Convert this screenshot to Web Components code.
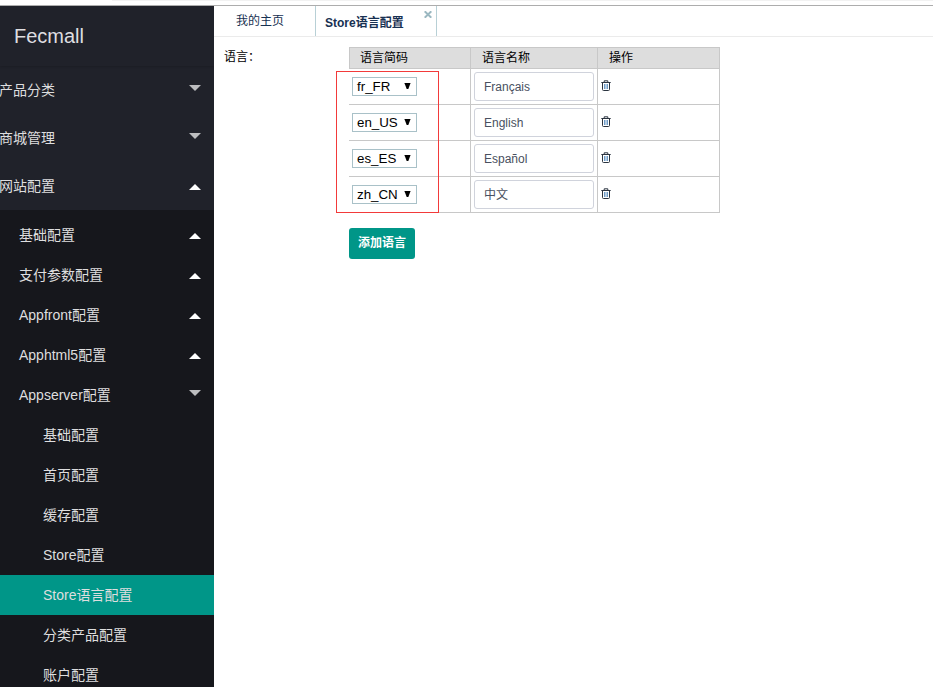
<!DOCTYPE html>
<html lang="zh-CN"><head><meta charset="utf-8"><title>Fecmall</title>
<style>
html,body{margin:0;height:100%;overflow:hidden}
body{font-family:"Liberation Sans","Noto Sans CJK SC",sans-serif;font-size:12px;color:#000;background:#fff}
</style></head><body>
<admin-shell>
 <side-bar slot="side" brand="Fecmall">
  <nav-item arrow="down">产品分类</nav-item>
  <nav-item arrow="down">商城管理</nav-item>
  <nav-item arrow="up">网站配置</nav-item>
  <nav-group slot="group">
   <nav-item level="2" arrow="up">基础配置</nav-item>
   <nav-item level="2" arrow="up">支付参数配置</nav-item>
   <nav-item level="2" arrow="up">Appfront配置</nav-item>
   <nav-item level="2" arrow="up">Apphtml5配置</nav-item>
   <nav-item level="2" arrow="down">Appserver配置</nav-item>
   <nav-item level="3">基础配置</nav-item>
   <nav-item level="3">首页配置</nav-item>
   <nav-item level="3">缓存配置</nav-item>
   <nav-item level="3">Store配置</nav-item>
   <nav-item level="3" active>Store语言配置</nav-item>
   <nav-item level="3">分类产品配置</nav-item>
   <nav-item level="3">账户配置</nav-item>
  </nav-group>
 </side-bar>
 <page-tab slot="tabs">我的主页</page-tab>
 <page-tab slot="tabs" active>Store语言配置</page-tab>
 <form-field label="语言：">
  <lang-table>
   <lang-row code="fr_FR" name="Français"></lang-row>
   <lang-row code="en_US" name="English"></lang-row>
   <lang-row code="es_ES" name="Español"></lang-row>
   <lang-row code="zh_CN" name="中文"></lang-row>
  </lang-table>
  <solid-button>添加语言</solid-button>
 </form-field>
</admin-shell>
<script>
function define(name, render){
  customElements.define(name, class extends HTMLElement{
    constructor(){super();this.attachShadow({mode:'open'});}
    connectedCallback(){this.shadowRoot.innerHTML='<style>*{box-sizing:border-box}:host{box-sizing:border-box}</style>'+render(this);}
  });
}
define('admin-shell',()=>`<style>
:host{display:flex;flex-direction:column;height:687px}
.top{height:6px;flex:none;border-bottom:1px solid #adadad;background:linear-gradient(#f2f2f2,#f2f2f2) 112px 0/100% 1px no-repeat}
.body{display:flex;flex:1;min-height:0}
main{flex:1;min-width:0}
.tabs{display:flex;height:31px;border-bottom:1px solid #ebebeb}
</style><div class="top"></div><div class="body"><slot name="side"></slot><main><div class="tabs"><slot name="tabs"></slot></div><slot></slot></main></div>`);
define('side-bar',el=>`<style>
:host{display:flex;flex-direction:column;flex:none;width:214px;background:#20222a;overflow:hidden}
.brand{height:60px;flex:none;padding-left:14px;font-size:20px;line-height:60px;color:#dedee0;box-shadow:0 1px 2px rgba(0,0,0,.15)}
</style><div class="brand">${el.getAttribute('brand')}</div><slot></slot><slot name="group"></slot>`);
define('nav-group',()=>`<style>:host{display:block;flex:1;padding-top:5px;background:#16171c}</style><slot></slot>`);
define('nav-item',el=>`<style>
:host{display:flex;flex:none;align-items:center;justify-content:space-between;height:48px;padding-right:13px;font-size:14px;color:#dededf;white-space:nowrap}
span{display:block;line-height:20px;margin-left:-1px}
:host([level="2"]){height:40px;padding-left:20px}
:host([level="3"]){height:40px;padding-left:44px}
:host([active]){background:#009688}
svg{display:block;width:12px;height:6px;fill:#fff;margin-top:2px}
:host([arrow=down]) svg{fill:#bcbdbf;margin-top:-4px}
</style><span><slot></slot></span>${el.hasAttribute('arrow')?`<svg viewBox="0 0 12 6"><path d="${el.getAttribute('arrow')==='up'?'M0 6 6 0l6 6z':'M0 0h12L6 6z'}"/></svg>`:''}`);
define('page-tab',el=>`<style>
:host{display:block;position:relative;height:30px;width:102px;padding-left:22px;border-right:1px solid #b8d0d6;line-height:31px;color:#183152}
:host([active]){width:121px;padding-left:9px;line-height:35px;font-weight:bold}
svg{position:absolute;right:4px;top:5px;width:8px;height:7px;stroke:#9bb8c1;stroke-width:2;fill:none}
</style><slot></slot>${el.hasAttribute('active')?'<svg viewBox="0 0 8 7"><path d="M.7.3 7.3 6.7M7.3.3.7 6.7"/></svg>':''}`);
define('form-field',el=>`<style>
:host{display:grid;grid-template-columns:125px 371px;padding:10px 0 0 10px}
label{line-height:20px}
</style><label>${el.getAttribute('label')}</label><div><slot></slot></div>`);
define('lang-table',()=>`<style>
:host{display:block;position:relative}
.head{display:grid;grid-template-columns:121px 127px 122px;height:22px;background:#ddd;border:1px solid #c8c8c8;border-right:0;line-height:20px}
.head b{font-weight:normal;padding-left:11px;border-right:1px solid #c8c8c8}
.head b:first-child{padding-left:10px}
.mark{position:absolute;left:-13px;top:24px;width:103px;height:142px;border:1px solid #f23a3a}
</style><div class="head"><b>语言简码</b><b>语言名称</b><b>操作</b></div><slot></slot><div class="mark"></div>`);
define('lang-row',el=>`<style>
:host{display:grid;grid-template-columns:122px 127px 122px;height:36px;border-bottom:1px solid #c8c8c8}
.cell{display:flex;align-items:center;padding-left:3px;border-right:1px solid #c8c8c8}
.select{display:flex;align-items:center;justify-content:space-between;width:65px;height:19px;border:1px solid #a9c1c8;padding:0 5px 0 4px;font-size:13.333px;line-height:17px}
.select svg{width:7px;height:6px;display:block;margin-top:-2px}
.input{width:120px;height:29px;border:1px solid #d0d3dc;border-radius:3px;padding-left:9px;line-height:28px;color:#495060}
.bin{width:10px;height:11px;display:block;margin-top:-2px}
</style><div class="cell"><div class="select"><span>${el.getAttribute('code')}</span><svg viewBox="0 0 7 6"><path d="M.4 0h6.2L4.3 6H2.7z"/></svg></div></div>
<div class="cell"><div class="input">${el.getAttribute('name')}</div></div>
<div class="cell"><svg class="bin" viewBox="0 0 10 11" fill="none" stroke="#2b3440"><path d="M.3 2.5h9.4M3.2 2V.8h3.6V2M1.5 3v6.5q0 1 1 1h5q1 0 1-1V3"/><path d="M3.5 4v5M5 4v5M6.5 4v5" stroke-width=".9" stroke="#5b8fc0"/></svg></div>`);
define('solid-button',()=>`<style>
:host{display:block;width:66px;height:31px;margin-top:15px;border-radius:3px;background:#009688;color:#fff;font-weight:bold;line-height:31px;text-align:center}
</style><slot></slot>`);
</script></body></html>
